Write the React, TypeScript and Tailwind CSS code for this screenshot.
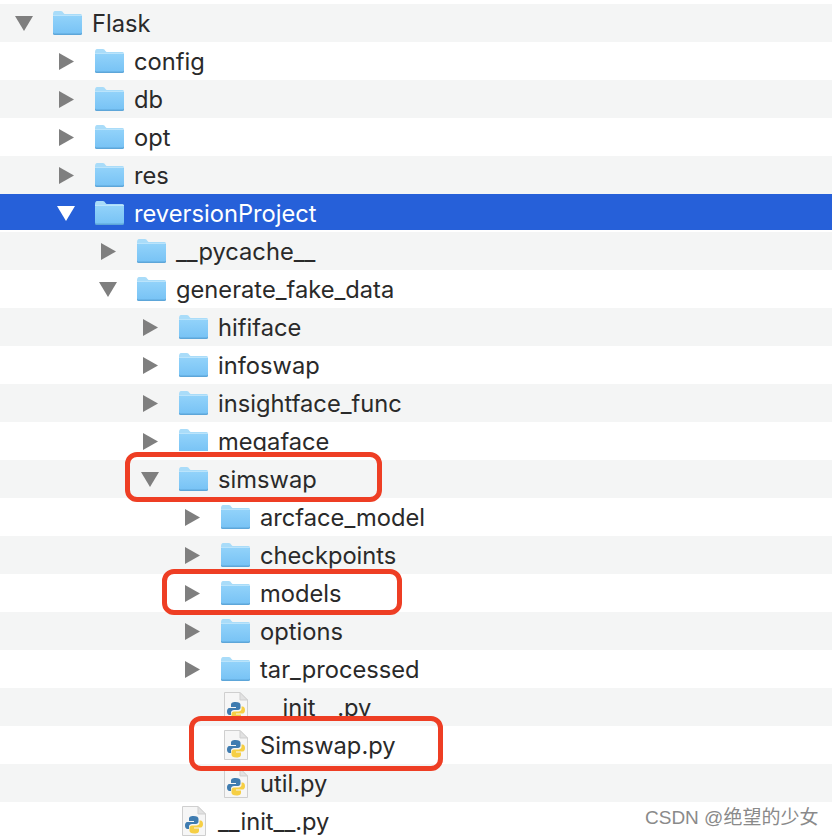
const rows: { name: string; depth: number; kind: "open" | "closed" | "file"; clip?: string; selected?: boolean }[] = [
  { name: "Flask", depth: 0, kind: "open" },
  { name: "config", depth: 1, kind: "closed" },
  { name: "db", depth: 1, kind: "closed" },
  { name: "opt", depth: 1, kind: "closed" },
  { name: "res", depth: 1, kind: "closed" },
  { name: "reversionProject", depth: 1, kind: "open", selected: true, clip: "h-[36px]" },
  { name: "__pycache__", depth: 2, kind: "closed" },
  { name: "generate_fake_data", depth: 2, kind: "open" },
  { name: "hififace", depth: 3, kind: "closed" },
  { name: "infoswap", depth: 3, kind: "closed" },
  { name: "insightface_func", depth: 3, kind: "closed" },
  { name: "megaface", depth: 3, kind: "closed", clip: "h-[29px]" },
  { name: "simswap", depth: 3, kind: "open" },
  { name: "arcface_model", depth: 4, kind: "closed" },
  { name: "checkpoints", depth: 4, kind: "closed" },
  { name: "models", depth: 4, kind: "closed" },
  { name: "options", depth: 4, kind: "closed" },
  { name: "tar_processed", depth: 4, kind: "closed" },
  { name: "__init__.py", depth: 4, kind: "file", clip: "h-[28px]" },
  { name: "Simswap.py", depth: 4, kind: "file" },
  { name: "util.py", depth: 4, kind: "file" },
  { name: "__init__.py", depth: 3, kind: "file" },
];

function Arrow({ open, selected }: { open: boolean; selected?: boolean }) {
  const fill = selected ? "#ffffff" : "#7f7f7f";
  return (
    <svg width="20" height="20" viewBox="0 0 20 20" className="shrink-0">
      {open ? <polygon points="0,3 18,3 9,18" fill={fill} /> : <polygon points="2,2 17,10.5 2,19" fill={fill} />}
    </svg>
  );
}

function Folder() {
  return (
    <svg width="31" height="30" viewBox="0 0 31 30" className="shrink-0">
      <defs>
        <linearGradient id="folderBody" x1="0" y1="0" x2="0" y2="1">
          <stop offset="0" stopColor="#93d3fa" />
          <stop offset="1" stopColor="#78c3f5" />
        </linearGradient>
      </defs>
      {/* tab */}
      <path d="M1 6.5 Q1 3 3 3 H9 Q10.5 3 11.5 5 L12.5 6 H28.5 Q30 6 30 7.5 V11 H1 Z" fill="#a9dcf9" />
      {/* body with the darker bottom edge */}
      <rect x="1" y="7" width="29" height="20" rx="1.5" fill="#5da6d9" />
      <rect x="1" y="7" width="29" height="18.5" rx="1.5" fill="url(#folderBody)" />
      <rect x="1" y="7" width="29" height="1" fill="#bbe4fb" />
    </svg>
  );
}

function PyFile() {
  return (
    <svg width="24" height="30" viewBox="0 0 24 30" className="shrink-0">
      <path d="M0.5 0.5 H16 L23.5 8 V29.5 H0.5 Z" fill="#f6f6f6" stroke="#cfcfcf" />
      <path d="M16 0.5 V8 H23.5 Z" fill="#e2e2e2" stroke="#cfcfcf" />
      <path d="M11.5 10 C8 10 7 11 7 13 V15 H12 V16 H5.5 C3.5 16 3 18 3 19.5 C3 21.5 4 23 5.5 23 H7 V20.5 C7 19 8.5 18 10 18 H14 C15.5 18 16.5 17 16.5 15.5 V13 C16.5 11 15 10 11.5 10 Z" fill="#3f7cb0" />
      <path d="M12.5 27.5 C16 27.5 17 26.5 17 24.5 V22.5 H12 V21.5 H18.5 C20.5 21.5 21 19.5 21 18 C21 16 20 14.5 18.5 14.5 H17.5 V17 C17.5 18.5 16 19.5 14.5 19.5 H10 C8.5 19.5 7.5 20.5 7.5 22 V24.5 C7.5 26.5 9 27.5 12.5 27.5 Z" fill="#f6cf45" />
    </svg>
  );
}

function Row({ row, index }: { row: (typeof rows)[0]; index: number }) {
  const stripe = index % 2 === 0 ? "bg-[#f4f5f5]" : "bg-white";
  const tone = row.selected ? "bg-[#2660d9] text-white" : "text-[#2a2a2a]";
  return (
    <div className={`h-[38px] ${stripe}`}>
      <div
        className={`flex items-start overflow-hidden pt-[4px] ${tone} ${row.clip ?? "h-[38px]"}`}
        style={{ paddingLeft: 15 + row.depth * 42 }}
      >
        <div className="w-[37px] h-[30px] flex items-center shrink-0">
          {row.kind !== "file" && <Arrow open={row.kind === "open"} selected={row.selected} />}
        </div>
        {row.kind === "file" ? (
          <div className="w-[31px] flex justify-center shrink-0">
            <PyFile />
          </div>
        ) : (
          <Folder />
        )}
        <span className="ml-[9px] text-[23.7px] leading-[32px] whitespace-nowrap font-['Inter',sans-serif]">{row.name}</span>
      </div>
    </div>
  );
}

export default function App() {
  return (
    <div className="relative w-[832px] h-[838px] overflow-hidden bg-white pt-[4px]">
      {rows.map((row, i) => (
        <Row key={i} row={row} index={i} />
      ))}

      {/* Red annotation boxes */}
      <div className="absolute left-[125px] top-[452px] w-[257px] h-[50px] rounded-[12px] border-[5px] border-[#ee3e24]" />
      <div className="absolute left-[162px] top-[569px] w-[240px] h-[46px] rounded-[12px] border-[5px] border-[#ee3e24]" />
      <div className="absolute left-[189px] top-[716px] w-[254px] h-[55px] rounded-[12px] border-[5px] border-[#ee3e24]" />

      {/* Watermark */}
      <span className="absolute left-[645px] top-[806px] text-[19px] leading-[24px] whitespace-nowrap text-[#8a8a8a] font-['Liberation_Sans','Noto_Sans_CJK_SC',sans-serif]">
        CSDN @绝望的少女
      </span>
    </div>
  );
}
